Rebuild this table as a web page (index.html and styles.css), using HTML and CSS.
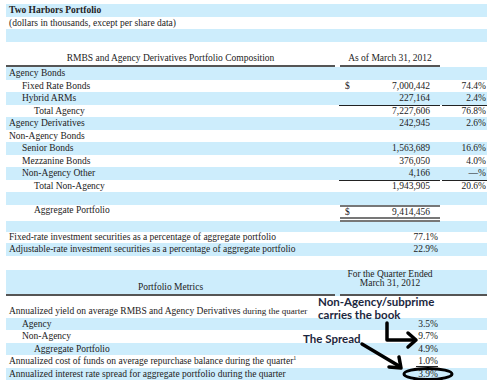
FILE: index.html
```html
<!DOCTYPE html>
<html>
<head>
<meta charset="utf-8">
<link rel="stylesheet" href="styles.css">
</head>
<body>
<div class="sheet">
  <div class="row blue h13"><div class="c1 bold">Two Harbors Portfolio</div></div>
  <div class="row h12"><div class="c1">(dollars in thousands, except per share data)</div></div>
  <div class="row blue h13"></div>
  <div class="row head1">
    <div class="hl">RMBS and Agency Derivatives Portfolio Composition</div>
    <div class="hv">As of March 31, 2012</div>
    <div></div>
  </div>
  <div class="row blue"><div class="c1">Agency Bonds</div></div>
  <div class="row"><div class="c1 i1">Fixed Rate Bonds</div><div class="num dollar"><span>$</span><span>7,000,442</span></div><div class="pct">74.4%</div></div>
  <div class="row blue"><div class="c1 i1">Hybrid ARMs</div><div class="num ul">227,164</div><div class="pct ul gap">2.4%</div></div>
  <div class="row"><div class="c1 i2">Total Agency</div><div class="num">7,227,606</div><div class="pct">76.8%</div></div>
  <div class="row blue"><div class="c1">Agency Derivatives</div><div class="num">242,945</div><div class="pct">2.6%</div></div>
  <div class="row"><div class="c1">Non-Agency Bonds</div></div>
  <div class="row blue"><div class="c1 i1">Senior Bonds</div><div class="num">1,563,689</div><div class="pct">16.6%</div></div>
  <div class="row"><div class="c1 i1">Mezzanine Bonds</div><div class="num">376,050</div><div class="pct">4.0%</div></div>
  <div class="row blue"><div class="c1 i1">Non-Agency Other</div><div class="num ul">4,166</div><div class="pct ul gap">—%</div></div>
  <div class="row"><div class="c1 i2">Total Non-Agency</div><div class="num">1,943,905</div><div class="pct">20.6%</div></div>
  <div class="row blue"></div>
  <div class="row agg"><div class="c1 i2">Aggregate Portfolio</div><div class="num dollar box"><span>$</span><span>9,414,456</span></div><div></div></div>
  <div class="row blue h115"></div>
  <div class="row h11"><div class="c1">Fixed-rate investment securities as a percentage of aggregate portfolio</div><div class="pv">77.1%</div></div>
  <div class="row blue"><div class="c1">Adjustable-rate investment securities as a percentage of aggregate portfolio</div><div class="pv">22.9%</div></div>
  <div class="row h14"></div>
  <div class="row blue head2">
    <div class="hl">Portfolio Metrics</div>
    <div class="hv2">For the Quarter Ended<br>March 31, 2012</div>
    <div class="hp"></div>
  </div>
  <div class="row yield"><div class="c1">Annualized yield on average RMBS and Agency Derivatives <span class="sm">during the quarter</span></div></div>
  <div class="row blue"><div class="c1 i1">Agency</div><div class="pv">3.5%</div></div>
  <div class="row"><div class="c1 i1">Non-Agency</div><div class="pv">9.7%</div></div>
  <div class="row blue"><div class="c1 i2">Aggregate Portfolio</div><div class="pv">4.9%</div></div>
  <div class="row"><div class="c1">Annualized cost of funds on average repurchase balance during the quarter<sup>1</sup></div><div class="pv"><span class="u1">1.0%</span></div></div>
  <div class="row blue"><div class="c1">Annualized interest rate spread for aggregate portfolio during the quarter</div><div class="pv">3.9%</div></div>

  <div class="note n1">Non-Agency/subprime<br>carries the book</div>
  <div class="note n2">The Spread</div>
  <svg class="marks" width="490" height="380" viewBox="0 0 490 380">
    <g fill="none" stroke="#000" stroke-width="3.5" stroke-linecap="round" stroke-linejoin="round">
      <polyline points="387,323 387,340 413,340"/>
      <polyline points="408,333 416,340 408,347"/>
      <line x1="362" y1="344" x2="399" y2="366"/>
      <polyline points="389,367 401,368 399,357"/>
      <ellipse cx="428" cy="374" rx="24" ry="5.5" stroke-width="3"/>
    </g>
  </svg>
</div>
</body>
</html>
```
FILE: styles.css
```css
html, body {
  margin: 0;
  background: #fff;
}
body {
  font-family: "Liberation Serif", "Times New Roman", serif;
  font-size: 9.5px;
  color: #222;
  width: 490px;
  height: 380px;
  overflow: hidden;
}
.sheet {
  position: relative;
  padding: 4px 0 0 6px;
  width: 481px;
}
.row {
  display: grid;
  grid-template-columns: 333px 101px 47px;
  height: 12.5px;
  line-height: 13px;
  box-sizing: border-box;
}
.row > div {
  box-sizing: border-box;
  white-space: nowrap;
}
.blue { background: #cdedfc; }
.h13 { height: 13px; line-height: 13px; }
.h12 { height: 12px; line-height: 12px; }
.h115 { height: 11.5px; }
.h11 { height: 11px; line-height: 11px; }
.h14 { height: 14px; }
.bold { font-weight: bold; }
.c1 { padding-left: 3px; }
.i1 { padding-left: 16px; }
.i2 { padding-left: 28px; }
.num { text-align: right; padding-right: 10px; }
.dollar { display: flex; justify-content: space-between; padding-left: 6px; }
.pct { text-align: right; padding-right: 1px; }
.pv { text-align: right; padding-right: 2px; }
.ul { border-bottom: 1px solid #222; }
.gap { margin-left: 2px; }
.sm { font-size: 9px; }
.head1 {
  height: 25px;
  align-items: end;
}
.hl {
  text-align: center;
  border-bottom: 2px solid #555;
  margin-right: 4px;
  line-height: 13px;
}
.hv {
  text-align: center;
  border-bottom: 2px solid #555;
  margin-left: 1px;
  line-height: 13px;
}
.agg {
  height: 16px;
  line-height: 10px;
}
.box {
  border-top: 2px solid #777;
  border-bottom: 5px double #777;
  margin-left: 1px;
  padding-left: 5px;
}
.head2 {
  height: 26px;
  align-items: end;
}
.head2 .hl { line-height: 12px; padding-bottom: 1px; }
.hv2 {
  text-align: center;
  line-height: 9.5px;
  padding-bottom: 5px;
  border-bottom: 2px solid #555;
  margin-left: 1px;
}
.hp { border-bottom: 2px solid #555; align-self: stretch; }
.yield {
  height: 22px;
  align-items: end;
}
sup { font-size: 6px; line-height: 0; vertical-align: 4px; }
.u1 {
  display: inline-block;
  border-bottom: 1px solid #222;
  line-height: 10px;
  padding-left: 2px;
}
.note {
  position: absolute;
  font-family: Lato, "Open Sans", sans-serif;
  font-weight: bold;
  font-size: 11.5px;
  line-height: 13px;
  color: #1b2740;
  white-space: nowrap;
}
.n1 { left: 318px; top: 295px; }
.n2 { left: 303px; top: 332px; }
.marks {
  position: absolute;
  left: 0;
  top: 0;
  pointer-events: none;
}
```
